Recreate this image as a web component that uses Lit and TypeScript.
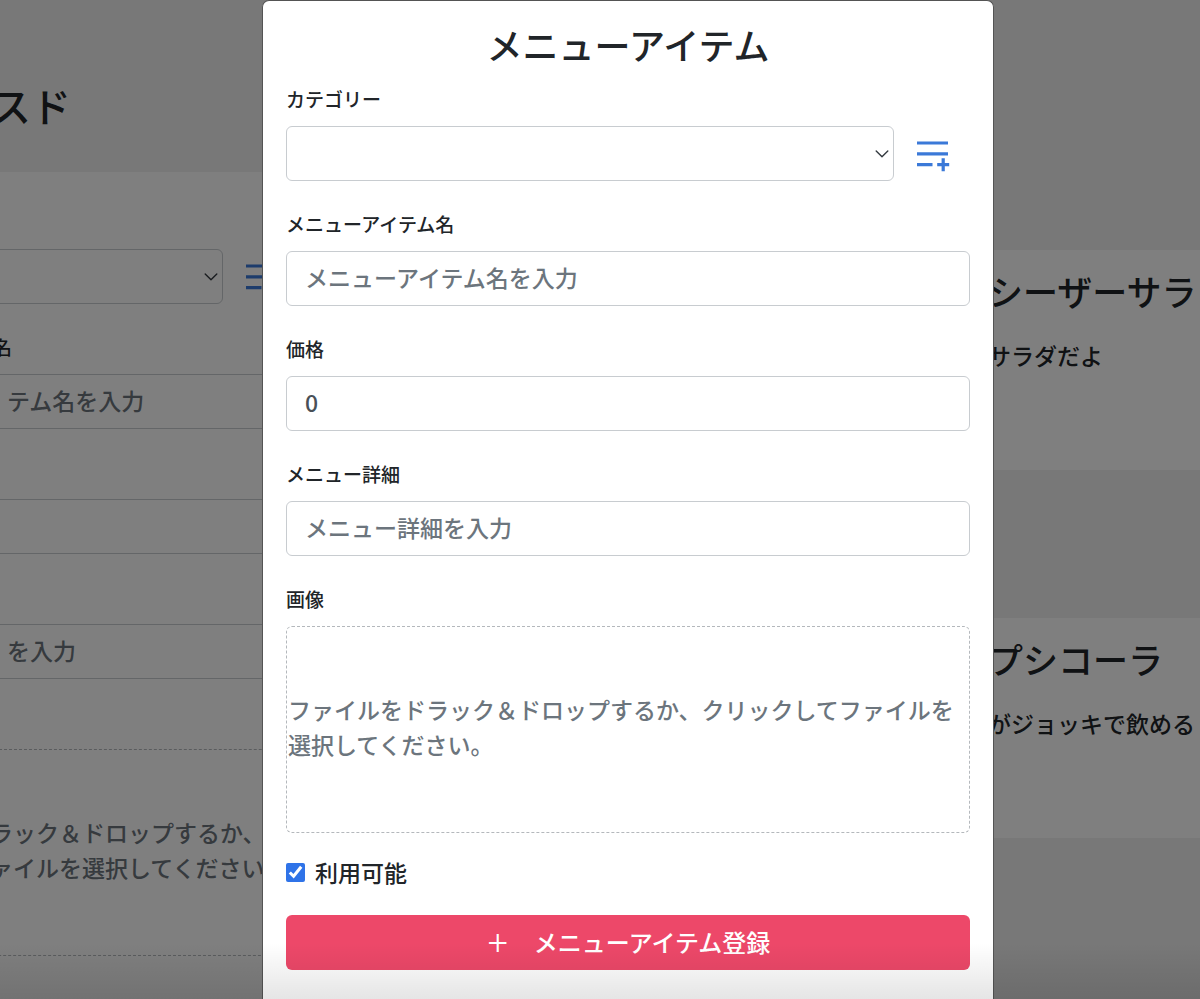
import { LitElement, html, css, svg, nothing } from "lit";
import { customElement, property } from "lit/decorators.js";

const chevron = html`<svg class="chevron" width="14" height="8" viewBox="0 0 14 8" aria-hidden="true">
  <path d="M1.2 1 7 6.8 12.8 1" fill="none" stroke="currentColor" stroke-width="1.4" stroke-linecap="round" stroke-linejoin="round" />
</svg>`;

const playlistAdd = svg`<path fill="currentColor"
  d="M0 6.4h31v3.2H0zM0 17.2h31v3.2H0zM0 28.1h15.5v3.2H0zM20.2 28.1h4.4v-4.9h3.2v4.9h4.4v3.2h-4.4v4.9h-3.2v-4.9h-4.4z" />`;

interface FormText {
  category: string;
  name: string;
  nameHint: string;
  price: string;
  priceValue: string;
  detail: string;
  detailHint: string;
  image: string;
  drop: string[];
}

@customElement("menu-item-form")
export class MenuItemForm extends LitElement {
  @property({ attribute: false }) text!: FormText;
  @property({ type: Boolean }) actions = false;

  static styles = css`
    :host {
      display: block;
      color: #212529;
      font-weight: 500;
    }
    * {
      box-sizing: border-box;
    }
    .form {
      display: flex;
      flex-direction: column;
      gap: 29px;
    }
    .label {
      display: block;
      min-height: 27px;
      margin-bottom: 14px;
      font-size: 19px;
      line-height: 27px;
      white-space: nowrap;
    }
    :host(:not([actions])) .label {
      padding-left: 5px;
    }
    .field {
      display: block;
      width: 100%;
      height: 55px;
      margin: 0;
      padding: 0 18px 3px;
      border: 1px solid #c8ccd0;
      border-radius: 6px;
      background: #fff;
      color: #495057;
      font: inherit;
      font-size: 23px;
      appearance: none;
    }
    .field::placeholder {
      color: #6c757d;
      opacity: 1;
    }
    .pick-row {
      display: flex;
      align-items: center;
      gap: 23px;
    }
    .select {
      flex: 1;
      display: grid;
      align-items: center;
      min-width: 0;
    }
    .select > * {
      grid-area: 1 / 1;
    }
    .chevron {
      justify-self: end;
      margin-right: 5px;
      color: #343a40;
      pointer-events: none;
    }
    .add {
      width: 53px;
      display: flex;
      padding: 0;
      border: 0;
      background: none;
      color: #3b79d8;
    }
    .drop {
      display: flex;
      align-items: center;
      height: 207px;
      padding: 0 1px 5px;
      border: 1px dashed #b4b8bc;
      border-radius: 6px;
      color: #6c757d;
      font-size: 23px;
      line-height: 35px;
    }
    .file {
      display: none;
    }
    .check {
      display: flex;
      align-items: center;
      gap: 10px;
      margin-top: 22px;
      font-size: 23px;
      line-height: 34px;
    }
    .box {
      width: 19px;
      height: 19px;
      margin: 0;
      accent-color: #2f73e8;
    }
    .submit {
      display: block;
      width: 100%;
      height: 55px;
      margin-top: 26px;
      padding: 0 0 3px;
      border: 0;
      border-radius: 6px;
      background: #ed4869;
      color: #fff;
      font: inherit;
      font-size: 24px;
    }
  `;

  render() {
    const t = this.text;
    return html`
      <form class="form" @submit=${(e: Event) => e.preventDefault()}>
        <div>
          <label class="label" for="category">${t.category}</label>
          <div class="pick-row">
            <div class="select">
              <select class="field" id="category"></select>
              ${chevron}
            </div>
            <button class="add" type="button" aria-label="カテゴリーを追加">
              <svg width="33" height="37" viewBox="0 0 33 37">${playlistAdd}</svg>
            </button>
          </div>
        </div>
        <div>
          <label class="label" for="name">${t.name}</label>
          <input class="field" id="name" type="text" placeholder=${t.nameHint} />
        </div>
        <div>
          <label class="label" for="price">${t.price}</label>
          <input class="field" id="price" type="text" inputmode="numeric" .value=${t.priceValue} />
        </div>
        <div>
          <label class="label" for="detail">${t.detail}</label>
          <input class="field" id="detail" type="text" placeholder=${t.detailHint} />
        </div>
        <div>
          <label class="label" for="image">${t.image}</label>
          <label class="drop" for="image">
            <span>${t.drop.map((line, i) => html`${i ? html`<br />` : nothing}${line}`)}</span>
          </label>
          <input class="file" id="image" type="file" accept="image/*" />
          ${this.actions
            ? html`
                <label class="check"><input class="box" type="checkbox" checked />利用可能</label>
                <button class="submit" type="submit">＋　メニューアイテム登録</button>
              `
            : nothing}
        </div>
      </form>
    `;
  }
}

@customElement("app-root")
export class AppRoot extends LitElement {
  static styles = css`
    :host {
      display: grid;
      grid-template-columns: minmax(0, 1fr);
      min-height: 100vh;
      overflow: hidden;
      font-family: "Noto Sans CJK JP", sans-serif;
      color: #212529;
    }
    * {
      box-sizing: border-box;
    }
    .page,
    .backdrop,
    .fade {
      grid-area: 1 / 1;
    }
    .page {
      display: grid;
      grid-template-columns: 311px minmax(0, 1fr) 212px;
      margin-left: -12px;
      background: #f1f1f1;
    }
    .editor {
      display: flex;
      flex-direction: column;
    }
    .store {
      margin: 0;
      padding: 81px 0 43px 3px;
      font-size: 40px;
      line-height: 48px;
      font-weight: 500;
      white-space: nowrap;
    }
    .panel {
      flex: 1;
      padding-top: 36px;
      background: #fff;
    }
    .list {
      grid-column: 3;
      display: flex;
      flex-direction: column;
      gap: 148px;
      padding-top: 250px;
    }
    .card {
      padding: 20px 0 97px;
      background: #fff;
      white-space: nowrap;
    }
    .card-title {
      margin: 0 0 26px;
      font-size: 35px;
      line-height: 42px;
      font-weight: 500;
    }
    .card-text {
      margin: 0;
      font-size: 23px;
      line-height: 35px;
      font-weight: 500;
    }
    .backdrop {
      z-index: 1;
      display: grid;
      grid-template-columns: 262px minmax(0, 1fr) 206px;
      background: rgba(0, 0, 0, 0.5);
    }
    .modal {
      grid-column: 2;
      padding: 22px 23px 24px;
      border: 1px solid #545454;
      border-bottom: 0;
      border-radius: 7px 7px 0 0;
      background: #fff;
    }
    .title {
      margin: 0 0 20px;
      font-size: 36px;
      line-height: 42px;
      font-weight: 500;
      text-align: center;
    }
    .fade {
      z-index: 2;
      align-self: end;
      height: 56px;
      background: linear-gradient(rgba(0, 0, 0, 0), rgba(0, 0, 0, 0.1));
      pointer-events: none;
    }
  `;

  private pageText: FormText = {
    category: "",
    name: "名",
    nameHint: "テム名を入力",
    price: "",
    priceValue: "",
    detail: "",
    detailHint: "を入力",
    image: "",
    drop: ["ラック＆ドロップするか、", "ァイルを選択してください"],
  };

  private modalText: FormText = {
    category: "カテゴリー",
    name: "メニューアイテム名",
    nameHint: "メニューアイテム名を入力",
    price: "価格",
    priceValue: "0",
    detail: "メニュー詳細",
    detailHint: "メニュー詳細を入力",
    image: "画像",
    drop: ["ファイルをドラック＆ドロップするか、クリックしてファイルを選択してください。"],
  };

  private cards = [
    { title: "シーザーサラ", text: "サラダだよ" },
    { title: "プシコーラ", text: "がジョッキで飲める" },
  ];

  render() {
    return html`
      <main class="page" inert>
        <section class="editor">
          <h1 class="store">スド</h1>
          <div class="panel"><menu-item-form .text=${this.pageText}></menu-item-form></div>
        </section>
        <section class="list">
          ${this.cards.map(
            (c) => html`<article class="card">
              <h2 class="card-title">${c.title}</h2>
              <p class="card-text">${c.text}</p>
            </article>`
          )}
        </section>
      </main>
      <div class="backdrop">
        <div class="modal" role="dialog" aria-modal="true" aria-labelledby="title">
          <h2 class="title" id="title">メニューアイテム</h2>
          <menu-item-form actions .text=${this.modalText}></menu-item-form>
        </div>
      </div>
      <div class="fade"></div>
    `;
  }
}
